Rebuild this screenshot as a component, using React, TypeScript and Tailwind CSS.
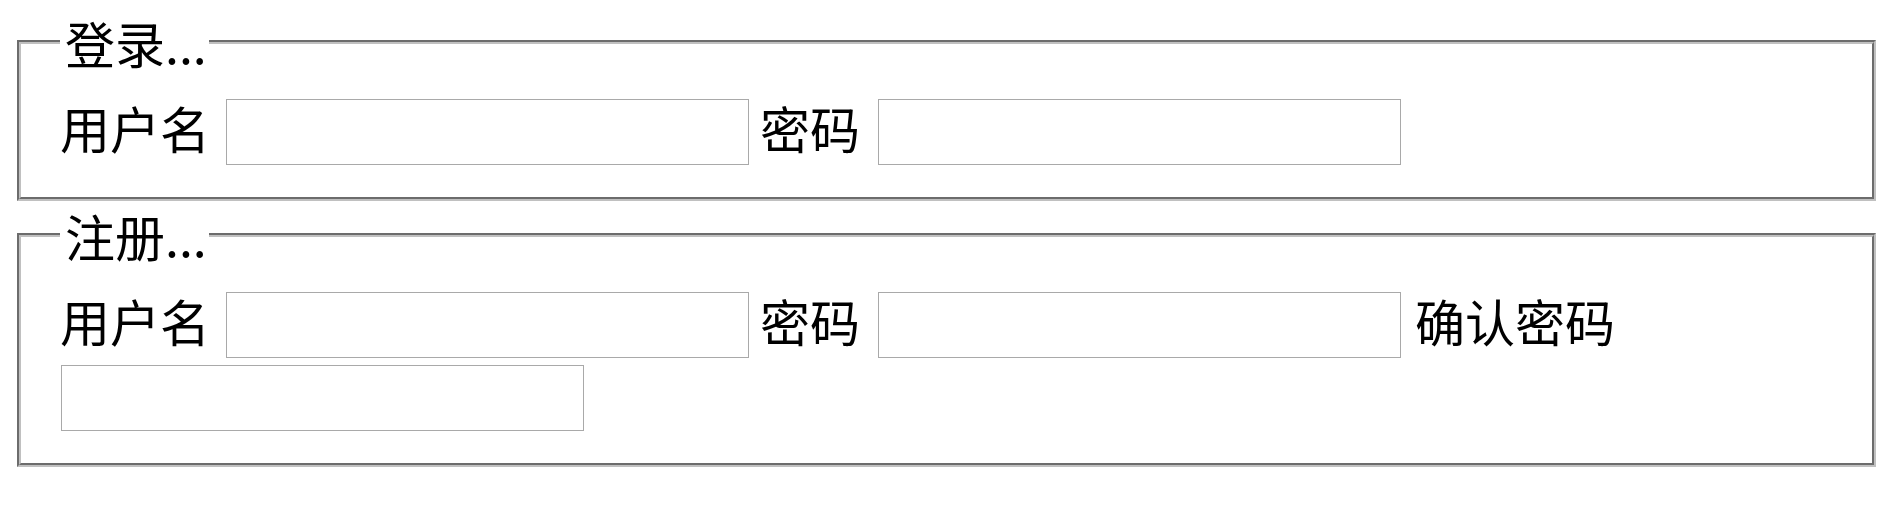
import React from "react";

const font = "font-['Noto_Sans_CJK_SC',sans-serif]";

function Label({ children, className = "" }: { children: React.ReactNode; className?: string }) {
  return (
    <span className={`text-[50px] leading-[56px] text-black whitespace-nowrap shrink-0 ${className}`}>
      {children}
    </span>
  );
}

function Field({ className = "" }: { className?: string }) {
  return (
    <input
      type="text"
      className={`h-[66px] w-[523px] shrink-0 border border-solid border-[#a9a9a9] bg-white outline-none ${className}`}
    />
  );
}

export default function App() {
  return (
    <div className={`${font} bg-white w-[1899px] h-[512px] overflow-hidden pt-[14px]`}>
      <fieldset className="ml-[17px] w-[1859px] border-[4px] [border-style:groove] border-[#c0c0c0] pl-[39px] pr-[20px] pt-[29px] pb-[32px] m-0">
        <legend className="pl-[5px] pr-[2px] text-[50px] leading-[56px] text-black">登录...</legend>
        <div className="flex items-start">
          <Label>用户名</Label>
          <Field className="ml-[16px]" />
          <Label className="ml-[11px]">密码</Label>
          <Field className="ml-[18px] w-[522px]" />
        </div>
      </fieldset>
      <fieldset className="ml-[17px] mt-[6px] w-[1859px] border-[4px] [border-style:groove] border-[#c0c0c0] pl-[39px] pr-[20px] pt-[29px] pb-[32px]">
        <legend className="pl-[5px] pr-[2px] text-[50px] leading-[56px] text-black">注册...</legend>
        <div className="flex items-start">
          <Label>用户名</Label>
          <Field className="ml-[16px]" />
          <Label className="ml-[11px]">密码</Label>
          <Field className="ml-[18px] w-[522px]" />
          <Label className="ml-[14px]">确认密码</Label>
        </div>
        <div className="mt-[7px] flex">
          <Field className="ml-[1px] w-[522px]" />
        </div>
      </fieldset>
    </div>
  );
}
